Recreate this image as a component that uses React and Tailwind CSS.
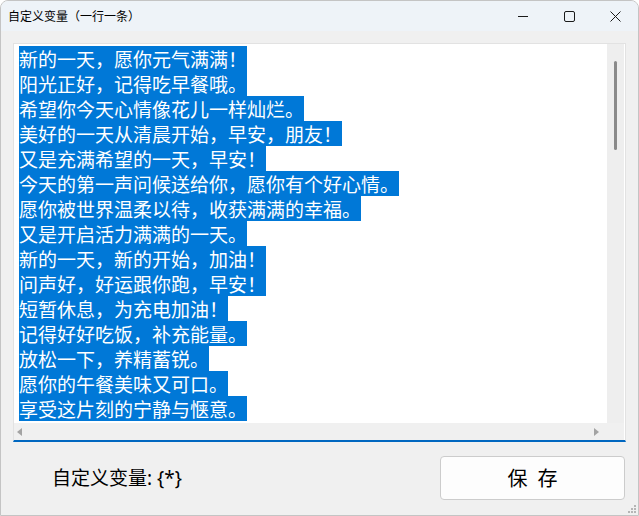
import React from 'react'

const LINES = [
  '新的一天，愿你元气满满！',
  '阳光正好，记得吃早餐哦。',
  '希望你今天心情像花儿一样灿烂。',
  '美好的一天从清晨开始，早安，朋友！',
  '又是充满希望的一天，早安！',
  '今天的第一声问候送给你，愿你有个好心情。',
  '愿你被世界温柔以待，收获满满的幸福。',
  '又是开启活力满满的一天。',
  '新的一天，新的开始，加油！',
  '问声好，好运跟你跑，早安！',
  '短暂休息，为充电加油！',
  '记得好好吃饭，补充能量。',
  '放松一下，养精蓄锐。',
  '愿你的午餐美味又可口。',
  '享受这片刻的宁静与惬意。',
]

const FONT = { fontFamily: '"Microsoft YaHei", "Noto Sans CJK SC", "Noto Sans", sans-serif' }

export default function App() {
  return (
    <div
      className="w-[639px] h-[516px] flex flex-col bg-[#f0f0f0] border border-[#c4c4c4] rounded-t-[8px] overflow-hidden relative"
      style={FONT}
    >
      {/* Title bar */}
      <div className="h-[30px] flex items-center bg-[#eef3f8] flex-shrink-0">
        <span className="pl-[7px] text-[12px] text-black leading-none">自定义变量（一行一条）</span>
        <div className="ml-auto flex h-full">
          <div className="w-[46px] h-full flex items-center justify-center">
            <svg width="10" height="10" viewBox="0 0 10 10">
              <path d="M0 5.5h10" stroke="#1a1a1a" strokeWidth="1" />
            </svg>
          </div>
          <div className="w-[46px] h-full flex items-center justify-center">
            <svg width="11" height="11" viewBox="0 0 11 11">
              <rect x="0.5" y="0.5" width="10" height="10" rx="1.5" fill="none" stroke="#1a1a1a" strokeWidth="1" />
            </svg>
          </div>
          <div className="w-[46px] h-full flex items-center justify-center">
            <svg width="11" height="11" viewBox="0 0 11 11">
              <path d="M0.5 0.5L10.5 10.5M10.5 0.5L0.5 10.5" stroke="#1a1a1a" strokeWidth="1" />
            </svg>
          </div>
        </div>
      </div>

      {/* Text box */}
      <div className="ml-[12px] mt-[12px] w-[613px] h-[399px] flex flex-col bg-white border-t border-x border-[#e2e2e2] border-b-2 border-b-[#0067c0] flex-shrink-0">
        <div className="flex flex-1 min-h-0">
          <div className="flex-1 pl-[5px] pt-[2px] overflow-hidden">
            {LINES.map((line) => (
              <div key={line} className="h-[25px]">
                <span className="inline-block h-[25px] leading-[25px] text-[19px] text-white bg-[#0078d7] whitespace-nowrap">
                  {line}
                </span>
              </div>
            ))}
          </div>
          <div className="w-[17px] bg-[#eeeeee] relative flex justify-center mr-[1px]">
            <div className="mt-[17px] w-[3px] h-[89px] rounded-full bg-[#8a8a8a]" />
          </div>
        </div>
        <div className="h-[17px] flex bg-[#f0f0f0] mr-[1px]">
          <div className="flex-1 flex items-center justify-between px-[3px]">
            <svg width="6" height="8" viewBox="0 0 6 8">
              <path d="M5 0L0 4L5 8Z" fill="#a3a3a3" />
            </svg>
            <svg width="6" height="8" viewBox="0 0 6 8" className="mr-[4px]">
              <path d="M0 0L5 4L0 8Z" fill="#a3a3a3" />
            </svg>
          </div>
          <div className="w-[17px] bg-[#f0f0f0]" />
        </div>
      </div>

      {/* Footer */}
      <div className="flex items-center flex-1 pr-[13px]">
        <span
          className="ml-[51px] text-[19px] text-black leading-none"
          style={{ fontFamily: '"Noto Sans", "Noto Sans CJK SC", sans-serif' }}
        >
          自定义变量: {'{*}'}
        </span>
        <button className="ml-auto w-[185px] h-[44px] mt-[-2px] rounded-[4px] border border-[#cccccc] bg-[#fdfdfd] flex items-center justify-center gap-[10px] text-[20px] text-black">
          <span>保</span>
          <span>存</span>
        </button>
      </div>

      {/* Resize grip */}
      <svg className="absolute right-[2px] bottom-[2px]" width="8" height="8" viewBox="0 0 8 8">
        <rect x="6" y="0" width="2" height="2" fill="#b5b5b5" />
        <rect x="3" y="3" width="2" height="2" fill="#b5b5b5" />
        <rect x="6" y="3" width="2" height="2" fill="#b5b5b5" />
        <rect x="0" y="6" width="2" height="2" fill="#b5b5b5" />
        <rect x="3" y="6" width="2" height="2" fill="#b5b5b5" />
        <rect x="6" y="6" width="2" height="2" fill="#b5b5b5" />
      </svg>
    </div>
  )
}
